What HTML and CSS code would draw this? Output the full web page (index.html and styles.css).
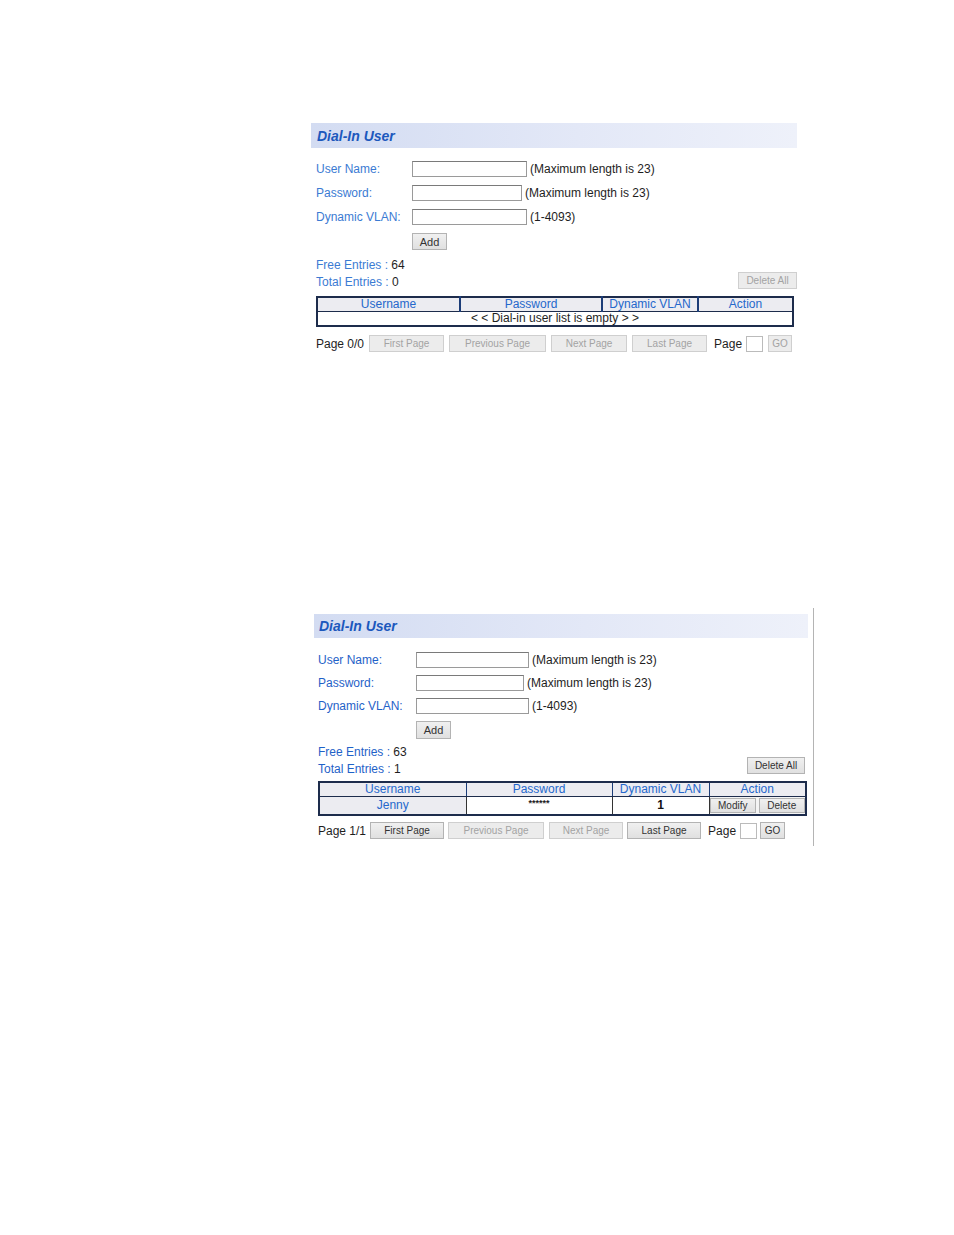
FILE: index.html
```html
<!DOCTYPE html>
<html>
<head>
<meta charset="utf-8">
<link rel="stylesheet" href="styles.css">
</head>
<body>
<div class="page">
  <section class="panel panel-a">
    <div class="head"><span class="title">Dial-In User</span></div>
    <div class="form">
      <span class="lbl">User Name:</span>
      <span class="field"><span class="inp w1"></span><span class="note">(Maximum length is 23)</span></span>
      <span class="lbl">Password:</span>
      <span class="field"><span class="inp w2"></span><span class="note">(Maximum length is 23)</span></span>
      <span class="lbl">Dynamic VLAN:</span>
      <span class="field"><span class="inp w1"></span><span class="note">(1-4093)</span></span>
      <span></span>
      <span class="field"><span class="btn add">Add</span></span>
    </div>
    <div class="entries">
      <div class="counts">
        <div><span class="lbl">Free Entries : </span>64</div>
        <div><span class="lbl">Total Entries : </span>0</div>
      </div>
      <span class="btn dis delall">Delete All</span>
    </div>
    <table class="list">
      <colgroup><col class="c1"><col class="c2"><col class="c3"><col class="c4"></colgroup>
      <tr class="hrow"><th>Username</th><th>Password</th><th>Dynamic VLAN</th><th>Action</th></tr>
      <tr><td colspan="4" class="empty">&lt; &lt; Dial-in user list is empty &gt; &gt;</td></tr>
    </table>
    <div class="pager">
      <span class="pg">Page 0/0</span>
      <span class="btn dis b-first">First Page</span>
      <span class="btn dis b-prev">Previous Page</span>
      <span class="btn dis b-next">Next Page</span>
      <span class="btn dis b-last">Last Page</span>
      <span class="pg pg2">Page</span>
      <span class="inp pinp"></span>
      <span class="btn dis b-go">GO</span>
    </div>
  </section>

  <section class="panel panel-b">
    <div class="head"><span class="title">Dial-In User</span></div>
    <div class="form">
      <span class="lbl">User Name:</span>
      <span class="field"><span class="inp w1"></span><span class="note">(Maximum length is 23)</span></span>
      <span class="lbl">Password:</span>
      <span class="field"><span class="inp w2"></span><span class="note">(Maximum length is 23)</span></span>
      <span class="lbl">Dynamic VLAN:</span>
      <span class="field"><span class="inp w1"></span><span class="note">(1-4093)</span></span>
      <span></span>
      <span class="field"><span class="btn add">Add</span></span>
    </div>
    <div class="entries">
      <div class="counts">
        <div><span class="lbl">Free Entries : </span>63</div>
        <div><span class="lbl">Total Entries : </span>1</div>
      </div>
      <span class="btn delall">Delete All</span>
    </div>
    <table class="list">
      <colgroup><col class="c1"><col class="c2"><col class="c3"><col class="c4"></colgroup>
      <tr class="hrow"><th>Username</th><th>Password</th><th>Dynamic VLAN</th><th>Action</th></tr>
      <tr class="drow">
        <td class="uname">Jenny</td>
        <td class="pw">******</td>
        <td class="vl">1</td>
        <td class="act"><div class="acts"><span class="btn b-mod">Modify</span><span class="btn b-del">Delete</span></div></td>
      </tr>
    </table>
    <div class="pager">
      <span class="pg">Page 1/1</span>
      <span class="btn b-first">First Page</span>
      <span class="btn dis b-prev">Previous Page</span>
      <span class="btn dis b-next">Next Page</span>
      <span class="btn b-last">Last Page</span>
      <span class="pg pg2">Page</span>
      <span class="inp pinp"></span>
      <span class="btn b-go">GO</span>
    </div>
  </section>
</div>
</body>
</html>
```
FILE: styles.css
```css
html, body {
  margin: 0;
  padding: 0;
  background: #ffffff;
}
body {
  font-family: "Liberation Sans", Arial, sans-serif;
  font-size: 12px;
  color: #1e1e1e;
}
.page {
  width: 954px;
  height: 1235px;
  position: relative;
  overflow: hidden;
}
.panel {
  box-sizing: border-box;
}
.panel-a {
  margin: 123px 0 0 311px;
  width: 486px;
}
.panel-b {
  margin: 256px 0 0 314px;
  width: 500px;
  padding: 6px 0 7px 0;
  border-right: 1px solid #b4b4b4;
}
.panel-b .head {
  width: 494px;
}
.head {
  height: 25px;
  background: linear-gradient(to right, #d3dcf2 0%, #e3e8f7 55%, #eef1fa 100%);
  display: flex;
  align-items: center;
  padding-left: 6px;
  box-sizing: border-box;
}
.panel-b .head {
  height: 24px;
  padding-left: 5px;
}
.title {
  font-weight: bold;
  font-style: italic;
  font-size: 14px;
  color: #1c58bd;
}
.lbl {
  color: #3b7bd3;
}
.panel-b .lbl {
  color: #1f62c8;
}
.form {
  display: grid;
  grid-template-columns: 96px auto;
  row-gap: 8px;
  margin: 13px 0 0 5px;
  align-items: center;
}
.panel-b .form {
  grid-template-columns: 98px auto;
  row-gap: 7px;
  margin: 14px 0 0 4px;
}
.form .lbl {
  line-height: 16px;
}
.field {
  display: flex;
  align-items: center;
  height: 16px;
}
.inp {
  display: inline-block;
  box-sizing: border-box;
  height: 16px;
  background: #fff;
  border: 1px solid #9a9a9a;
  border-top-color: #7a7a7a;
}
.w1 { width: 115px; }
.w2 { width: 110px; }
.panel-b .w1 { width: 113px; }
.panel-b .w2 { width: 108px; }
.note {
  margin-left: 3px;
  color: #1e1e1e;
}
.btn {
  display: inline-flex;
  align-items: center;
  justify-content: center;
  box-sizing: border-box;
  height: 16px;
  font-size: 10px;
  color: #333;
  background: linear-gradient(#f0f0f0, #e0e0e0);
  border: 1px solid #b3b3b3;
  white-space: nowrap;
}
.btn.dis {
  color: #a3a3a3;
  background: #ececec;
  border-color: #cfcfcf;
}
.add {
  width: 35px;
  height: 17px;
  margin-top: 1px;
  font-size: 11px;
}
.panel-b .add {
  height: 18px;
}
.entries {
  display: flex;
  justify-content: space-between;
  align-items: flex-end;
  margin: 8px 0 0 5px;
  width: 481px;
}
.panel-b .entries {
  margin: 7px 0 0 4px;
  width: 487px;
}
.counts div {
  line-height: 17px;
}
.delall {
  width: 59px;
  height: 17px;
  margin-bottom: 2px;
}
.panel-b .delall {
  width: 58px;
  margin-bottom: 4px;
}
.list {
  border-collapse: collapse;
  border: 2px solid #1d2c4c;
  margin: 5px 0 0 5px;
  width: 476px;
  table-layout: fixed;
}
.panel-a .c1 { width: 143px; }
.panel-a .c2 { width: 142px; }
.panel-a .c3 { width: 96px; }
.panel-a .c4 { width: 95px; }
.panel-b .list {
  width: 487px;
  margin: 3px 0 0 4px;
}
.panel-b .c1 { width: 147px; }
.panel-b .c2 { width: 146px; }
.panel-b .c3 { width: 97px; }
.panel-b .c4 { width: 97px; }
.list th, .list td {
  padding: 0;
  text-align: center;
  font-weight: normal;
  border: 1px solid #1c3d78;
  line-height: 13px;
  height: 13px;
}
.hrow th {
  background: #ececf1;
  color: #2568cc;
  border-bottom: 1px solid #1d2c4c;
}
.panel-a .hrow th + th {
  border-left: 2px solid #1c3d78;
}
.empty {
  background: #fff;
  color: #1e1e1e;
}
.drow td {
  height: 17px;
  background: #fff;
  border-color: #333;
}
.drow .uname {
  background: #ececf1;
  color: #2568cc;
}
.drow .pw {
  font-size: 9px;
  font-weight: bold;
  vertical-align: top;
  line-height: 12px;
}
.drow .vl {
  font-weight: bold;
  color: #111;
}
.drow .act {
  background: #f4f4f4;
  padding: 0;
}
.acts {
  display: flex;
  justify-content: center;
  gap: 3px;
  height: 17px;
  align-items: center;
}
.b-mod, .b-del {
  width: 46px;
  height: 15px;
  font-size: 10px;
}
.pager {
  display: flex;
  align-items: center;
  margin: 8px 0 0 5px;
  height: 17px;
}
.panel-b .pager {
  margin: 6px 0 0 4px;
}
.pager .btn { height: 17px; }
.pg { margin-right: 5px; }
.pg2 { margin-left: 7px; margin-right: 4px; }
.b-first { width: 75px; margin-right: 5px; }
.b-prev { width: 97px; margin-right: 5px; }
.b-next { width: 76px; margin-right: 5px; }
.b-last { width: 75px; }
.pinp { width: 17px; height: 16px; margin-right: 5px; border-color: #bbb; }
.b-go { width: 24px; }
.panel-b .pg { margin-right: 4px; }
.panel-b .b-first { width: 74px; margin-right: 4px; }
.panel-b .b-prev { width: 96px; margin-right: 5px; }
.panel-b .b-next { width: 74px; margin-right: 4px; }
.panel-b .b-last { width: 74px; }
.panel-b .pg2 { margin-left: 7px; margin-right: 4px; }
.panel-b .pinp { width: 17px; margin-right: 3px; }
.panel-b .b-go { width: 25px; }
```
